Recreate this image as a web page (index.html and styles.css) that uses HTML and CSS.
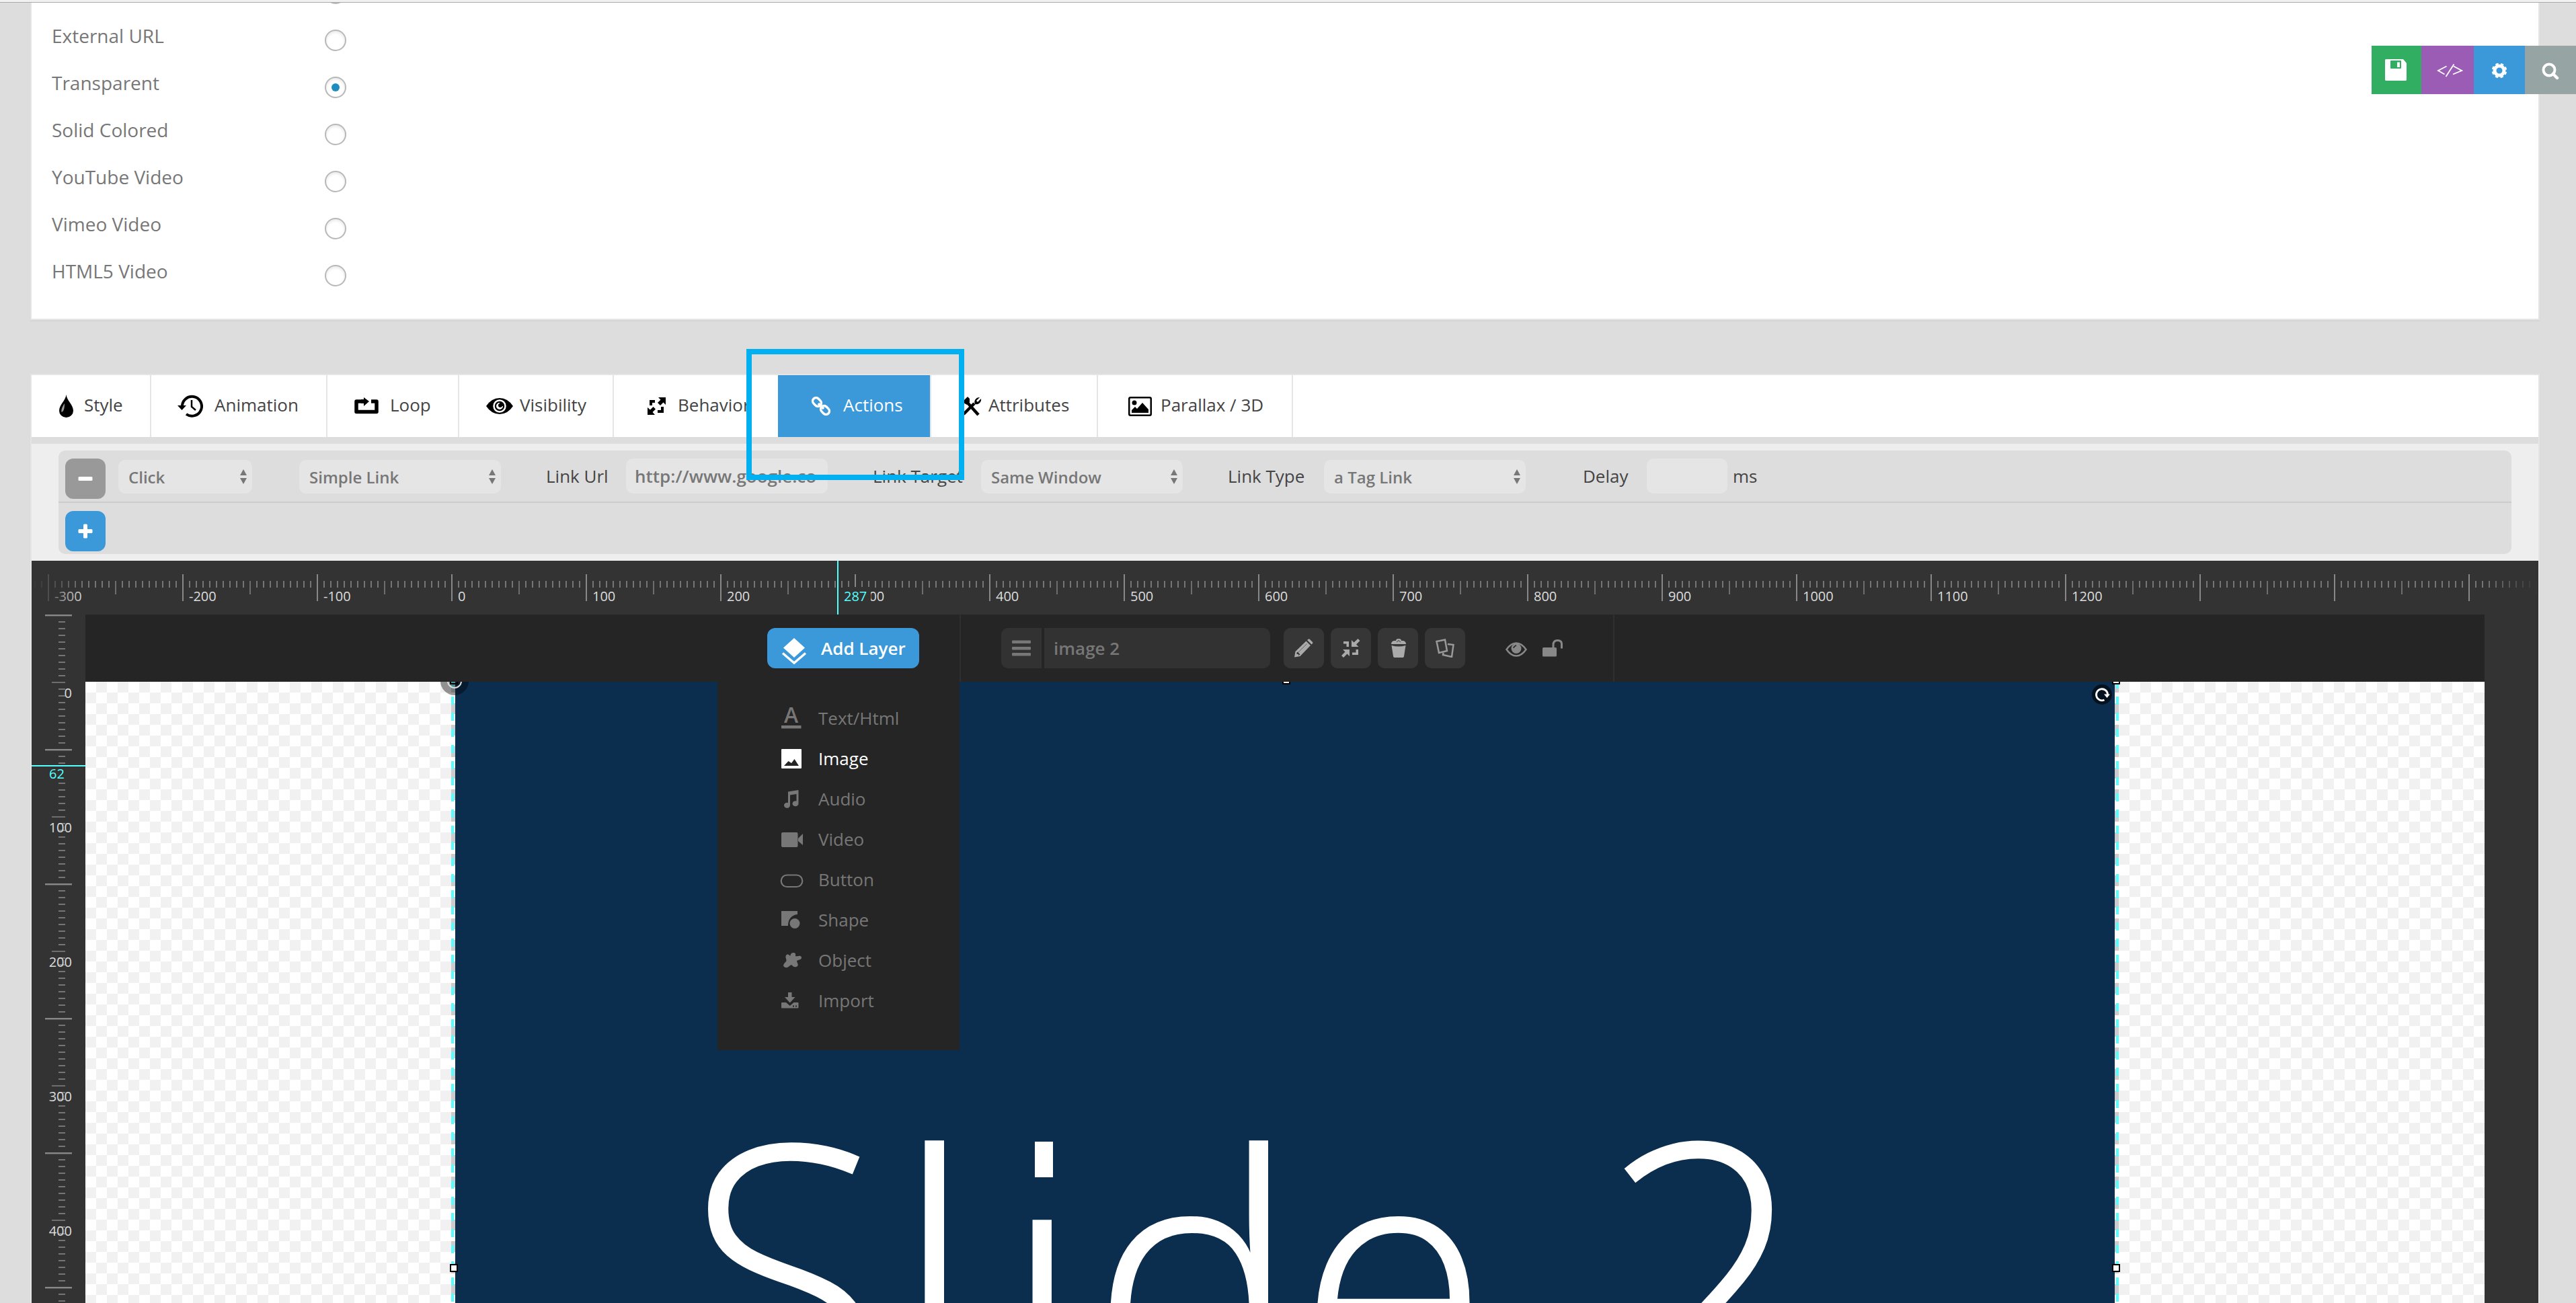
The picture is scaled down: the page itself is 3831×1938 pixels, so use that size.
FILE: index.html
```html
<!DOCTYPE html>
<html lang="en">
<head>
    <meta charset="UTF-8">
    <meta name="viewport" content="width=device-width, initial-scale=1.0">
    <title>Slide Editor</title>
    <link rel="stylesheet" href="styles.css">
</head>
<body>
    <div class="topline"></div>

    <!-- Slide background source -->
    <div class="panel source">
        <div class="source-row"><label>External URL</label><span class="radio"></span></div>
        <div class="source-row"><label>Transparent</label><span class="radio checked"></span></div>
        <div class="source-row"><label>Solid Colored</label><span class="radio"></span></div>
        <div class="source-row"><label>YouTube Video</label><span class="radio"></span></div>
        <div class="source-row"><label>Vimeo Video</label><span class="radio"></span></div>
        <div class="source-row"><label>HTML5 Video</label><span class="radio"></span></div>
    </div>

    <div class="side-buttons">
        <div class="side-btn save">
            <svg width="32" height="32" viewBox="0 0 32 32"><path fill="#fff" fill-rule="evenodd" d="M1 0H27L32 6V31L31 32H1L0 31V1ZM9 2Q8 2 8 3V13Q8 14 9 14H23Q24 14 24 13V3Q24 2 23 2ZM18 4.500H22V12H18Z"/></svg>
        </div>
        <div class="side-btn css">
            <svg width="40" height="22" viewBox="0 0 40 22" fill="none" stroke="#fff" stroke-width="1.800"><path d="M15.500 4.500L3 11L12.500 16.500M14.500 20L26.500 1.500M26 4.500L38 11L25 16.500"/></svg>
        </div>
        <div class="side-btn settings">
            <svg width="24" height="24" viewBox="0 0 24 24"><circle cx="12" cy="12" r="7" fill="none" stroke="#fff" stroke-width="5"/><circle cx="12" cy="12" r="9.800" fill="none" stroke="#fff" stroke-width="3" stroke-dasharray="4.200 3.500" stroke-dashoffset="-1.750"/></svg>
        </div>
        <div class="side-btn search">
            <svg width="26" height="26" viewBox="0 0 26 26" fill="none" stroke="#fff" stroke-width="4"><circle cx="11" cy="11" r="8.500"/><path d="M17 17L23 23" stroke-width="4.500" stroke-linecap="round"/></svg>
        </div>
    </div>

    <!-- Layer settings -->
    <div class="panel layer-panel">
        <div class="tabs">
            <div class="tab t-style">
                <svg width="21" height="34" viewBox="0 0 21 34"><path d="M10.500 0C11.500 9 21 15 21 24A10.500 10 0 0 1 0 24C0 15 9.500 9 10.500 0Z"/><path d="M8 13C4 19 3 22 3.500 26C7 25 8 20 8 13Z" fill="#999"/></svg>
                <span>Style</span>
            </div>
            <div class="tab t-animation">
                <svg width="38" height="34" viewBox="0 0 38 34" fill="none" stroke="#000" stroke-width="4"><path d="M7 18A14.500 14.500 0 1 1 13 29"/><path d="M0 16H13L6.500 23Z" fill="#000" stroke="none"/><path d="M21 8V18L27 23" stroke-width="2.500"/></svg>
                <span>Animation</span>
            </div>
            <div class="tab t-loop">
                <svg width="36" height="26" viewBox="0 0 36 26"><path fill="none" stroke="#000" stroke-width="5.500" stroke-linejoin="round" d="M12 6H3V21.500H33V6H25"/><path d="M10 3H14V0L22 6L14 13V9H10Z"/></svg>
                <span>Loop</span>
            </div>
            <div class="tab t-visibility">
                <svg width="40" height="26" viewBox="0 0 40 26"><path d="M0 13Q8 1 20 1T40 13Q32 25 20 25T0 13Z"/><circle cx="20" cy="13" r="8.500" fill="none" stroke="#fff" stroke-width="2.500"/><path d="M20 8A5 5 0 1 0 25 13H20Z" fill="#fff"/><circle cx="21" cy="12" r="3"/></svg>
                <span>Visibility</span>
            </div>
            <div class="tab t-behavior">
                <svg width="28" height="28" viewBox="0 0 28 28"><path d="M3 5H11V9H7V13H3ZM24 15V24H15V20H20V15ZM16 1H27V12L23.500 8.500L19 13L15 9L19.500 4.500ZM0 16L4 19.500L8.500 15L12 18.500L7.500 23L11 27H0Z"/></svg>
                <span>Behavior</span>
            </div>
            <div class="tab active t-actions">
                <svg width="30" height="30" viewBox="0 0 30 30" fill="none" stroke="#fff" stroke-width="3.500"><rect x="-5" y="-7" width="10" height="14" rx="5" transform="translate(9 9) rotate(-45)"/><rect x="-5" y="-7" width="10" height="14" rx="5" transform="translate(21 21) rotate(-45)"/><path d="M11 11L19 19"/></svg>
                <span>Actions</span>
            </div>
            <div class="tab t-attributes">
                <svg width="30" height="30" viewBox="0 0 30 30" fill="none" stroke="#000"><path d="M3 27L19 11" stroke-width="4.500"/><path d="M8 9L25 28" stroke-width="4.500"/><path d="M27 2L22 7L24 9L29 4A7 7 0 0 1 20 12A7 7 0 0 1 27 2Z" fill="#000" stroke="none"/><path d="M1 9L9 1L12 4V9L8 13Z" fill="#000" stroke="none"/></svg>
                <span>Attributes</span>
            </div>
            <div class="tab t-parallax">
                <svg width="35" height="29" viewBox="0 0 35 29"><rect x="1.250" y="1.250" width="32.500" height="26.500" rx="2" fill="none" stroke="#000" stroke-width="2.500"/><circle cx="9" cy="9" r="3.500"/><path d="M5 24V20L10 15L13 18L21 9L30 19V24Z"/></svg>
                <span>Parallax / 3D</span>
            </div>
        </div>

        <div class="actions">
            <div class="actions-box">
                <div class="action-row">
                    <div class="square-btn remove"><svg width="22" height="22" viewBox="0 0 22 22"><rect x="0.500" y="8" width="21" height="6" rx="1.500" fill="#fff"/></svg></div>
                    <div class="select s-event">Click<i class="arrows"></i></div>
                    <div class="select s-link">Simple Link<i class="arrows"></i></div>
                    <label class="l-url">Link Url</label>
                    <div class="input i-url">http://www.google.co</div>
                    <label class="l-target">Link Target</label>
                    <div class="select s-target">Same Window<i class="arrows"></i></div>
                    <label class="l-type">Link Type</label>
                    <div class="select s-type">a Tag Link<i class="arrows"></i></div>
                    <label class="l-delay">Delay</label>
                    <div class="input i-delay"></div>
                    <label class="l-ms">ms</label>
                </div>
                <div class="action-row add-row">
                    <div class="square-btn add"><svg width="22" height="22" viewBox="0 0 22 22"><rect x="0.500" y="8" width="21" height="6" rx="1.500" fill="#fff"/><rect x="8" y="0.500" width="6" height="21" rx="1.500" fill="#fff"/></svg></div>
                </div>
            </div>
        </div>

        <div class="highlight"></div>

        <div class="editor">
            <div class="ruler-h">
                <span>-300</span><span>-200</span><span>-100</span><span>0</span><span>100</span><span>200</span><span>300</span><span>400</span><span>500</span><span>600</span><span>700</span><span>800</span><span>900</span><span>1000</span><span>1100</span><span>1200</span>
                <div class="marker-h"><b>287</b></div>
            </div>
            <div class="editor-body">
                <div class="ruler-v">
                    <span>0</span><span>100</span><span>200</span><span>300</span><span>400</span>
                    <div class="marker-v"><b>62</b></div>
                </div>
                <div class="stage">
                    <div class="toolbar">
                        <div class="tool-add">
                            <div class="add-layer">
                                <svg width="38" height="40" viewBox="0 0 38 40"><path d="M19 1L35 15.500L19 30L3 15.500Z" fill="#fff"/><path d="M2 23.500L19 38L36 23.500" fill="none" stroke="#fff" stroke-width="3.500"/></svg>
                                <span>Add Layer</span>
                            </div>
                            <ul class="layer-menu">
                                <li><svg width="36" height="40" viewBox="0 0 36 40"><text x="16.500" y="27" text-anchor="middle" class="icon-letter">A</text><rect x="2" y="31" width="29.500" height="4.500"/></svg>Text/Html</li>
                                <li class="current"><svg width="36" height="40" viewBox="0 0 36 40"><path fill-rule="evenodd" d="M3 6H31Q32 6 32 7V34Q32 35 31 35H3Q2 35 2 34V7Q2 6 3 6ZM6 31H28L21.500 21L17 27L12.500 24Z"/></svg>Image</li>
                                <li><svg width="36" height="40" viewBox="0 0 36 40"><path d="M12 9.500L27.500 7V27A4.500 4 0 1 1 24.500 23.500V13L15 14.500V30A4.500 4 0 1 1 12 26Z"/></svg>Audio</li>
                                <li><svg width="36" height="40" viewBox="0 0 36 40"><rect x="2" y="10" width="24.500" height="22" rx="2"/><path d="M27 19L34 12V29L27 23Z"/></svg>Video</li>
                                <li><svg width="36" height="40" viewBox="0 0 36 40"><rect x="1.750" y="13.500" width="31.500" height="17.500" rx="8.500" fill="none" stroke="#777" stroke-width="2.200"/></svg>Button</li>
                                <li><svg width="36" height="40" viewBox="0 0 36 40"><path d="M2 7H26V12C17 13 12 19 12 29H2Z"/><circle cx="22" cy="25.500" r="7.500"/></svg>Shape</li>
                                <li><svg width="36" height="40" viewBox="0 0 36 40"><path d="M9 13C11 10 14 12 15 14C16 12 16 9 20 9C24 9 23 12 23 14C26 15 31 12 32 16C32 20 28 19 25 21C25 24 28 26 26 29C22 32 19 29 17 27C14 28 12 32 8 31C2 29 7 24 9 22C11 19 7 17 9 13Z"/></svg>Object</li>
                                <li><svg width="36" height="40" viewBox="0 0 36 40"><path fill-rule="evenodd" d="M12 8H17.500V15H22.500L14.750 23.500L7 15H12ZM3 23H9L14.750 28L20.500 23H26.500Q27.500 23 27.500 24V30.500Q27.500 31.500 26.500 31.500H3Q2 31.500 2 30.500V24Q2 23 3 23ZM19 27.500V29.500H21V27.500ZM23 27.500V29.500H25V27.500Z"/></svg>Import</li>
                            </ul>
                        </div>
                        <div class="tool-layer">
                            <div class="layer-list"><svg width="28" height="24" viewBox="0 0 28 24" fill="#777"><rect y="0.500" width="28" height="4.500" rx="1"/><rect y="10" width="28" height="4.500" rx="1"/><rect y="19" width="28" height="4.500" rx="1"/></svg></div>
                            <div class="layer-name">image 2</div>
                            <div class="tool-btn">
                                <svg width="28" height="28" viewBox="0 0 28 28" fill="#aaa"><path fill-rule="evenodd" d="M0 27.500L1.500 19L17.500 3.500L24 10L8.500 26ZM3.500 20.500V23H6V25L8.500 23.500L5 19.500Z"/><path d="M19 2L21 0.500Q22 0 23 1L27 5Q28 6 27 7L25.500 8.500Z"/><path d="M6 20L18.500 7.500" stroke="#666" stroke-width="1"/></svg>
                            </div>
                            <div class="tool-btn">
                                <svg width="28" height="28" viewBox="0 0 28 28" fill="#aaa"><path d="M3 4H11V12H7.500V7.500H3ZM25 24H16V20.500H21.500V16H25ZM15 2L18.500 5.500L24.500 0L27.500 3L22 8.500L25.500 12H15ZM2 16H12V26L8.500 22.500L3 28L0 25L5.500 19.500Z"/></svg>
                            </div>
                            <div class="tool-btn">
                                <svg width="26" height="28" viewBox="-2 0 26 28" fill="#aaa"><path d="M8 3Q8 0 12 0T16 3H19Q23 4 23 8H1Q1 4 5 3ZM1.500 10Q12 13 22.500 10L20 26Q20 28 17 28H7Q4 28 4 26Z"/><path d="M9 5L12 2.500L15 5" fill="none" stroke="#666" stroke-width="1.500"/></svg>
                            </div>
                            <div class="tool-btn">
                                <svg width="28" height="28" viewBox="0 0 28 28" fill="none" stroke="#999" stroke-width="2.500"><path d="M1.500 4L14 1.500L17 18L5 21Z"/><path d="M18 8L26.500 9L24 27L11 24L11.500 21"/></svg>
                            </div>
                            <svg class="i-eye" width="32" height="22" viewBox="0 0 32 22"><path d="M1.500 11Q8 1.500 16 1.500T30.500 11Q24 20.500 16 20.500T1.500 11Z" fill="none" stroke="#888" stroke-width="2.500"/><circle cx="16" cy="9.500" r="7.500" fill="#888"/><path d="M12 9Q12.500 6 16 5" fill="none" stroke="#252525" stroke-width="1.500"/></svg>
                            <svg class="i-lock" width="30" height="26" viewBox="0 0 30 26"><rect x="0" y="12" width="21" height="13.500" rx="1.500" fill="#888"/><path d="M16 13V8Q16 1.500 22.500 1.500T28.500 8V13.500" fill="none" stroke="#888" stroke-width="3"/></svg>
                        </div>
                    </div>
                    <div class="canvas">
                        <div class="slide">
                            <div class="caption"><span class="c-cap">S</span>l<span class="c-i">i</span><span class="c-d">d</span><span class="c-e">e </span><span class="c-num">2</span></div>
                            <div class="guide left"></div>
                            <div class="guide right"></div>
                            <div class="origin"></div>
                            <i class="handle tl"></i>
                            <i class="handle tc"></i>
                            <i class="handle tr"></i>
                            <i class="handle ml"></i>
                            <i class="handle mr"></i>
                            <div class="rotate"><svg width="24" height="24" viewBox="0 0 24 24"><path d="M15.500 20A8.500 8.500 0 1 1 20.500 12" fill="none" stroke="#fff" stroke-width="2.800"/><path d="M15 11.500H24L19.500 17Z" fill="#fff"/></svg></div>
                        </div>
                    </div>
                </div>
            </div>
        </div>
    </div>
</body>
</html>
```
FILE: styles.css
```css
*,
*::before,
*::after {
    box-sizing: border-box;
}
body {
    margin: 0;
    height: 1938px;
    overflow: hidden;
    position: relative;
    background: #ddd;
    color: #444;
    font-family: "Open Sans", sans-serif;
    font-size: 26px;
}
svg {
    display: block;
    flex: none;
}
.topline {
    height: 4px;
    background: #f1f1f1;
    border-bottom: 1px solid #aaa;
}
.panel {
    margin: 0 54px 0 45px;
    border: 2px solid #e5e5e5;
    box-shadow: 0 2px 2px rgba(0, 0, 0, 0.04);
}

/* Source */
.source {
    height: 472px;
    border-top: none;
    padding: 21px 0 0 30px;
    background: #fff;
    position: relative;
    overflow: hidden;
}
.source::before {
    content: "";
    position: absolute;
    left: 436px;
    top: -30px;
    width: 32px;
    height: 32px;
    border: 2px solid #b4b9be;
    border-radius: 50%;
}
.source-row {
    display: flex;
    align-items: center;
    height: 70px;
}
.source-row label {
    width: 406px;
    padding-bottom: 14px;
    font-size: 28px;
    color: #777;
}
.radio {
    width: 32px;
    height: 32px;
    border: 2px solid #b8b8b8;
    border-radius: 50%;
    background: #fff;
    box-shadow: inset 0 2px 4px rgba(0, 0, 0, 0.1);
}
.radio.checked::before {
    content: "";
    display: block;
    width: 12px;
    height: 12px;
    margin: 8px;
    border-radius: 50%;
    background: #1e8cbe;
}

/* Fixed buttons on the right edge */
.side-buttons {
    position: absolute;
    top: 68px;
    right: 0;
    display: flex;
    height: 72px;
}
.side-btn {
    width: 76px;
    display: flex;
    align-items: center;
}
.save {
    width: 74px;
    padding-left: 20px;
    background: #31ae62;
}
.css {
    width: 78px;
    padding: 2px 0 0 22px;
    background: #9b5cb5;
}
.settings {
    padding: 2px 0 0 26px;
    background: #3b99d9;
}
.search {
    padding: 3px 0 0 25px;
    background: #96a5a4;
}

/* Tabs */
.layer-panel {
    margin-top: 80px;
    border-bottom: none;
    position: relative;
}
.tabs {
    display: flex;
    height: 92px;
    padding-left: 2px;
    background: #fff;
}
.tab {
    display: flex;
    align-items: center;
    border-right: 2px solid #e5e5e5;
    white-space: nowrap;
}
.tab span {
    padding-bottom: 4px;
}
.t-style {
    width: 176px;
    padding-left: 39px;
    gap: 16px;
}
.t-animation {
    width: 262px;
    padding-left: 39px;
    gap: 17px;
}
.t-loop {
    width: 196px;
    padding-left: 40px;
    gap: 17px;
}
.t-visibility {
    width: 230px;
    padding-left: 40px;
    gap: 10px;
}
.t-behavior {
    width: 244px;
    padding-left: 50px;
    gap: 17px;
    border-right: none;
}
.t-actions {
    width: 228px;
    padding-left: 49px;
    gap: 18px;
}
.t-attributes {
    width: 248px;
    padding-left: 45px;
    gap: 10px;
}
.t-parallax {
    width: 290px;
    padding-left: 45px;
    gap: 13px;
}
.tab.active {
    color: #fff;
    background: #3b99d9;
    background-clip: padding-box;
}
.highlight {
    position: absolute;
    left: 1063px;
    top: -39px;
    width: 324px;
    height: 195px;
    border: 8px solid #00b0f0;
}

/* Actions */
.actions {
    height: 184px;
    padding: 10px 40px;
    border-top: 10px solid #ddd;
    background: #eee;
}
.actions-box {
    height: 154px;
    border-radius: 10px;
    background: #ddd;
}
.action-row {
    display: flex;
    align-items: flex-start;
    height: 78px;
    padding: 12px 0 0 10px;
    border-bottom: 2px solid #ccc;
}
.add-row {
    border-bottom: none;
}
.square-btn {
    display: flex;
    align-items: center;
    justify-content: center;
    width: 60px;
    height: 60px;
    border-radius: 12px;
}
.remove {
    background: #999;
}
.add {
    background: #3b99d9;
}
.select {
    display: flex;
    align-items: center;
    justify-content: space-between;
    width: 300px;
    height: 50px;
    margin-top: 2px;
    padding: 0 8px 0 15px;
    border-radius: 10px;
    background: #e5e5e5;
    color: #777;
    font-size: 24px;
    font-weight: 600;
}
.input {
    height: 52px;
    padding: 0 12px 0 13px;
    line-height: 52px;
    border-radius: 10px;
    background: #e5e5e5;
    color: #777;
    font-weight: 600;
    white-space: nowrap;
}
.action-row label {
    padding-left: 2px;
    line-height: 52px;
    white-space: nowrap;
}
.arrows::before,
.arrows::after {
    content: "";
    display: block;
    border: 5.5px solid transparent;
}
.arrows::before {
    border-top: none;
    border-bottom: 9px solid #777;
    margin-bottom: 4px;
}
.arrows::after {
    border-bottom: none;
    border-top: 9px solid #777;
}
.s-event {
    width: 199px;
    margin-left: 19px;
}
.s-link {
    margin-left: 70px;
}
.l-url {
    width: 121px;
    margin-left: 65px;
}
.i-url {
    width: 300px;
}
.l-target {
    width: 163px;
    margin-left: 65px;
}
.l-type {
    width: 145px;
    margin-left: 65px;
}
.l-delay {
    width: 97px;
    margin-left: 83px;
}
.i-delay {
    width: 120px;
}
.l-ms {
    margin-left: 6px;
}

/* Editor */
.editor {
    background: #333;
}
.ruler-h {
    position: relative;
    display: flex;
    height: 80px;
    padding-left: 34px;
    font-size: 20px;
    color: #ddd;
    background:
        linear-gradient(90deg, #888 2px, transparent 2px) 24px 20px / 200px 40px repeat-x,
        linear-gradient(90deg, #6e6e6e 2px, transparent 2px) 24px 30px / 100px 20px repeat-x,
        linear-gradient(90deg, #757575 2px, transparent 2px) 4px 30px / 10px 10px repeat-x;
}
.ruler-h span {
    width: 200px;
    flex: none;
    padding-top: 39px;
}
.ruler-h::after {
    content: "";
    position: absolute;
    inset: 0;
    background: linear-gradient(90deg, #333, transparent 80px, transparent 3648px, #333);
}
.marker-h {
    position: absolute;
    left: 1198px;
    top: 0;
    height: 80px;
    border-left: 2px solid #5ff;
    color: #5ff;
}
.marker-h b {
    display: block;
    margin: 39px 0 0 7px;
    padding: 0 6px 0 1px;
    background: #333;
    font-weight: 400;
}
.editor-body {
    display: flex;
    height: 1024px;
}
.ruler-v {
    position: relative;
    width: 80px;
    flex: none;
    padding: 102px 20px 0 0;
    overflow: hidden;
    text-align: right;
    font-size: 20px;
    line-height: 30px;
    color: #ddd;
    background:
        linear-gradient(#888 2px, #555 2px, #555 3px, transparent 3px) 20px 0 / 40px 200px repeat-y,
        linear-gradient(#6e6e6e 2px, transparent 2px) 30px 0 / 20px 100px repeat-y,
        linear-gradient(#757575 2px, transparent 2px) 40px 0 / 10px 10px repeat-y;
}
.ruler-v span {
    display: block;
    height: 200px;
}
.marker-v {
    position: absolute;
    left: 0;
    top: 224px;
    width: 80px;
    border-top: 2px solid #5ff;
    color: #5ff;
    text-align: left;
}
.marker-v b {
    display: block;
    width: 34px;
    height: 22px;
    margin-left: 26px;
    line-height: 21px;
    background: #333;
    font-weight: 400;
}
.stage {
    width: 3568px;
}
.toolbar {
    display: flex;
    height: 100px;
    background: #252525;
}
.tool-add {
    position: relative;
    width: 1302px;
    padding: 20px 0 0 1014px;
    border-right: 2px solid #2f2f2f;
}
.add-layer {
    display: flex;
    align-items: center;
    width: 226px;
    height: 60px;
    padding-left: 21px;
    gap: 21px;
    border-radius: 12px;
    background: #3b99d9;
    color: #fff;
    font-weight: 600;
    white-space: nowrap;
}
.add-layer svg {
    margin-top: 8px;
}
.layer-menu {
    position: absolute;
    z-index: 2;
    left: 940px;
    top: 100px;
    width: 360px;
    height: 548px;
    margin: 0;
    padding: 24px 0 0 93px;
    list-style: none;
    background: #252525;
    color: #777;
}
.layer-menu li {
    display: flex;
    align-items: center;
    gap: 21px;
    height: 60px;
}
.layer-menu svg {
    fill: #777;
}
.layer-menu .current {
    color: #fff;
}
.layer-menu .current svg {
    fill: #fff;
}
.icon-letter {
    font-size: 32px;
    font-weight: 600;
}
.tool-layer {
    display: flex;
    width: 972px;
    padding: 20px 0 0 60px;
    border-right: 2px solid #2f2f2f;
}
.layer-list {
    display: flex;
    align-items: center;
    justify-content: center;
    width: 60px;
    height: 60px;
    margin-right: 4px;
    border-radius: 10px 0 0 10px;
    background: #323232;
}
.layer-name {
    width: 336px;
    height: 60px;
    margin-right: 10px;
    padding-left: 14px;
    line-height: 60px;
    border-radius: 0 10px 10px 0;
    background: #323232;
    color: #777;
    font-weight: 600;
}
.tool-btn {
    display: flex;
    align-items: center;
    justify-content: center;
    width: 60px;
    height: 60px;
    margin-left: 10px;
    border-radius: 10px;
    background: #363636;
}
.i-eye {
    margin: 21px 23px 0 60px;
}
.i-lock {
    margin-top: 17px;
}

/* Canvas */
.canvas {
    height: 924px;
    padding-left: 550px;
    overflow: hidden;
    background: #fff repeating-conic-gradient(#fff 0 25%, #f1f1f1 0 50%) 16px 0 / 32px 32px;
}
.slide {
    position: relative;
    width: 2468px;
    height: 924px;
    padding: 618px 0 0 344px;
    background: #0b2e4f;
}
.caption {
    color: #fff;
    font-size: 515px;
    font-weight: 300;
    line-height: 1;
    letter-spacing: 44px;
    white-space: nowrap;
    -webkit-text-stroke: 3px #fff;
}
.caption span {
    line-height: 0;
}
.c-cap {
    font-size: 536px;
    letter-spacing: 18px;
}
.c-i {
    position: relative;
    letter-spacing: 15px;
}
/* squared dot of the i */
.c-i::after {
    content: "";
    position: absolute;
    left: 35px;
    top: 156px;
    width: 51px;
    height: 68px;
    border: solid #0b2e4f;
    border-width: 3px 12px 12px;
    background: #fff;
}
.c-d {
    letter-spacing: 1px;
}
.c-e {
    letter-spacing: 16px;
}
.c-num {
    font-size: 540px;
}
.guide {
    position: absolute;
    top: 0;
    width: 6px;
    height: 924px;
}
.guide.left {
    left: -6px;
    background:
        linear-gradient(#5ff 12px, transparent 12px) 0 -2px / 4px 24px repeat-y,
        linear-gradient(#ccc 16px, #fff 16px) 0 0 / 6px 32px repeat-y;
}
.guide.right {
    right: -6px;
    background:
        linear-gradient(#5ff 12px, transparent 12px) 2px -2px / 4px 24px repeat-y,
        linear-gradient(#ccc 16px, #fff 16px) 0 0 / 6px 32px repeat-y;
}
.handle {
    position: absolute;
    width: 12px;
    height: 12px;
    border: 2px solid #000;
    background: #fff;
}
.handle.tl {
    left: -8px;
    top: -8px;
    background: none;
}
.handle.tc {
    left: 1230px;
    top: -8px;
}
.handle.tr {
    right: -8px;
    top: -8px;
}
.handle.ml {
    left: -8px;
    top: 866px;
}
.handle.mr {
    right: -8px;
    top: 866px;
}
.origin {
    position: absolute;
    left: -22px;
    top: -22px;
    width: 42px;
    height: 42px;
    padding: 10px;
    border-radius: 50%;
    background: rgba(0, 0, 0, 0.4);
}
.origin::before {
    content: "";
    display: block;
    height: 22px;
    border: 2px solid #ddd;
    border-radius: 50%;
}
.rotate {
    position: absolute;
    right: 4px;
    top: 4px;
    width: 30px;
    height: 30px;
    padding: 3px;
    border-radius: 50%;
    background: rgba(0, 0, 0, 0.6);
}
```
